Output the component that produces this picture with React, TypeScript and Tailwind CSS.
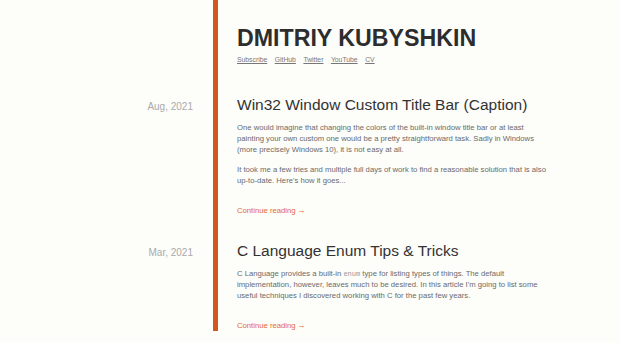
import React from 'react'

const posts = [
  {
    date: 'Aug, 2021',
    title: 'Win32 Window Custom Title Bar (Caption)',
    body: [
      <>
        One would imagine that changing the colors of the built-in window title bar or at least painting your own
        custom one would be a pretty straightforward task. Sadly in Windows (more precisely Windows 10), it is not
        easy at all.
      </>,
      <>
        It took me a few tries and multiple full days of work to find a reasonable solution that is also
        up-to-date. Here's how it goes...
      </>,
    ],
  },
  {
    date: 'Mar, 2021',
    title: 'C Language Enum Tips & Tricks',
    body: [
      <>
        C Language provides a built-in{' '}
        <code className="font-['Liberation_Mono',monospace] text-[7px] leading-[7px] text-[#999]">enum</code> type
        for listing types of things. The default implementation, however, leaves much to be desired. In this article
        I'm going to list some useful techniques I discovered working with C for the past few years.
      </>,
    ],
  },
]

const links = ['Subscribe', 'GitHub', 'Twitter', 'YouTube', 'CV']

export default function App() {
  return (
    <div className="min-h-screen bg-[#fdfdfa] font-['Liberation_Sans',Arial,sans-serif]">
      {/* Header */}
      <div className="flex">
        <div className="w-[213px] shrink-0" />
        <div className="flex-1 border-l-[5px] border-[#d4561f] pl-[19px] pt-[24px] pb-[6px]">
          <h1 className="text-[23.2px] leading-[28px] font-bold text-[#2d2d2d]">DMITRIY KUBYSHKIN</h1>
          <nav className="mt-[4px] flex gap-[7.5px] text-[6.8px] leading-[8px]">
            {links.map((l) => (
              <a key={l} href="#" className="text-[#777] underline">
                {l}
              </a>
            ))}
          </nav>
        </div>
      </div>

      {/* Posts */}
      {posts.map((p) => (
        <div key={p.title} className="flex items-baseline">
          <div className="w-[213px] shrink-0 pr-[20px] text-right text-[10px] text-[#aaa]">{p.date}</div>
          <div className="flex-1 border-l-[5px] border-[#d4561f] pl-[19px] pt-[26px]">
            <h2 className="text-[15.5px] leading-[18px] text-[#333]">{p.title}</h2>
            <div className="mt-[8px] max-w-[312px] text-[7.7px] leading-[11px] text-[#6a6a6a]">
              {p.body.map((b, i) => (
                <p key={i} className={i > 0 ? 'mt-[9px]' : ''}>
                  {b}
                </p>
              ))}
            </div>
            <a href="#" className="mt-[19px] block text-[7.7px] leading-[11px] text-[#e2683a]">
              Continue reading →
            </a>
          </div>
        </div>
      ))}
    </div>
  )
}
